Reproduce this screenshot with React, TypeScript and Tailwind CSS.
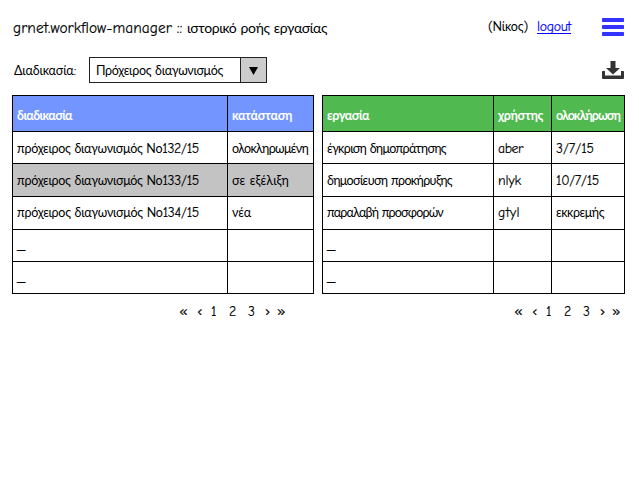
import { useLayoutEffect, useRef, useState } from "react";

/** A run of text whose letter spacing is adjusted so that it fills a given width. */
function Fit({ text, width, className = "" }: { text: string; width: number; className?: string }) {
  const ref = useRef<HTMLSpanElement>(null);
  const [spacing, setSpacing] = useState(0);
  useLayoutEffect(() => {
    if (!ref.current) return;
    const natural = ref.current.getBoundingClientRect().width - spacing * text.length;
    setSpacing((width - natural) / text.length);
  }, [text, width]);
  // Latin letters and digits are thinner than the Greek ones, so they are drawn a little larger and heavier.
  const runs = text.split(/([A-Za-z0-9./:()‹›«»-]+)/);
  return (
    <span ref={ref} className={`inline-block whitespace-pre ${className}`} style={{ letterSpacing: `${spacing}px` }}>
      {runs.map((run, i) =>
        i % 2 ? (
          <span key={i} className="text-[1.1em] [-webkit-text-stroke:0.15px_currentColor]">
            {run}
          </span>
        ) : (
          run
        ),
      )}
    </span>
  );
}

type Cell = [string, number];

function Row({ cells, className }: { cells: Cell[]; className: string }) {
  return (
    <>
      {cells.map(([text, width], i) => (
        <div key={i} className={`flex items-center border-r border-b border-black pl-1 ${className}`}>
          {text === "_" ? <span className="inline-block origin-left scale-x-[1.35]">_</span> : text && <Fit text={text} width={width} />}
        </div>
      ))}
    </>
  );
}

function Pager() {
  const items: [string, string, number][] = [
    ["«", "w-[18px]", 10],
    ["‹", "w-[13px]", 5],
    ["1", "w-[18px]", 6],
    ["2", "w-[19px]", 7],
    ["3", "w-[18px]", 7],
    ["›", "w-[12px]", 5],
    ["»", "w-[10px]", 10],
  ];
  return (
    <nav className="flex text-[12.5px] leading-4">
      {items.map(([label, slot, width]) => (
        <span key={label} className={slot}>
          <Fit text={label} width={width} className={/\d/.test(label) ? "pt-[1px] pl-[1px]" : "text-[14px]"} />
        </span>
      ))}
    </nav>
  );
}

export default function App() {
  return (
    <div className="h-[501px] w-[639px] overflow-hidden bg-white font-['Comic_Sans_MS','Comic_Neue','Lato','Open_Sans',sans-serif] text-[12.5px] leading-4 text-black">
      <header className="flex h-[56px] pt-[17px] pl-[13px]">
        <h1 className="w-[475px] pt-[1px] text-[14px] leading-5">
          <Fit text="grnet.workflow-manager :: " width={174} />
          <Fit text="ιστορικό ροής εργασίας" width={140} />
        </h1>
        <span className="w-[49px] pt-[2px]">
          <Fit text="(Νίκος)" width={40} />
        </span>
        <a className="h-[17px] w-[34px] border-b border-[#0000ff] pt-[2px] text-[#0000ff]">
          <Fit text="logout" width={34} className="leading-[14px]" />
        </a>
        <svg className="mt-[1px] ml-[31px] h-[18px] w-[22px]" viewBox="0 0 22 18" fill="#3333ff">
          <rect width="22" height="4" rx=".7" />
          <rect y="7" width="22" height="4" rx=".7" />
          <rect y="14" width="22" height="4" rx=".7" />
        </svg>
      </header>

      <div className="flex h-[39px] pl-[14px]">
        <label className="w-[75px] pt-[7px]">
          <Fit text="Διαδικασία:" width={62} />
        </label>
        <div className="mt-[1px] flex h-[26px] w-[178px] border border-[#222]">
          <div className="flex w-[151px] items-center border-r border-[#222] pt-[2px] pl-[6px]">
            <Fit text="Πρόχειρος διαγωνισμός" width={127} />
          </div>
          <div className="flex flex-1 items-center justify-center bg-[#cccccc]">
            <svg className="mt-[2px] h-[8px] w-[9px]" viewBox="0 0 9 8">
              <path d="M0 0H9L4.5 8Z" />
            </svg>
          </div>
        </div>
        <svg className="mt-[5px] ml-[335px] h-[18px] w-[22px]" viewBox="0 0 22 18" fill="#333333">
          <path d="M8.500 0h5v7H18l-7 6.500L4 7h4.500Z" />
          <path d="M.7 10H3v4.500h16V10h2.300a.7.7 0 0 1 .7.7V17a1 1 0 0 1-1 1H1a1 1 0 0 1-1-1v-6.300a.7.7 0 0 1 .7-.7Z" />
        </svg>
      </div>

      <main className="flex gap-2 pl-3">
        <section>
          <div className="grid w-[302px] grid-cols-[215px_86px] grid-rows-[36px_32px_33px_33px_32px_32px] border-t border-l border-black">
            <Row className="bg-[#7295ff] pt-1 font-bold text-white" cells={[["διαδικασία", 55], ["κατάσταση", 60]]} />
            <Row className="pt-[2px]" cells={[["πρόχειρος διαγωνισμός Νο132/15", 182], ["ολοκληρωμένη", 76]]} />
            <Row className="bg-[#c3c3c3] pt-[2px]" cells={[["πρόχειρος διαγωνισμός Νο133/15", 182], ["σε εξέλιξη", 57]]} />
            <Row className="" cells={[["πρόχειρος διαγωνισμός Νο134/15", 182], ["νέα", 19]]} />
            <Row className="" cells={[["_", 8], ["", 0]]} />
            <Row className="" cells={[["_", 8], ["", 0]]} />
          </div>
          <div className="pt-[9px] pl-[167px]">
            <Pager />
          </div>
        </section>

        <section>
          <div className="grid w-[303px] grid-cols-[171px_58px_73px] grid-rows-[36px_32px_33px_33px_32px_32px] border-t border-l border-black">
            <Row className="bg-[#50b950] pt-1 font-bold text-white" cells={[["εργασία", 42], ["χρήστης", 45], ["ολοκλήρωση", 64]]} />
            <Row className="pt-[2px]" cells={[["έγκριση δημοπράτησης", 119], ["aber", 25], ["3/7/15", 38]]} />
            <Row className="pt-[2px]" cells={[["δημοσίευση προκήρυξης", 125], ["nlyk", 23], ["10/7/15", 43]]} />
            <Row className="" cells={[["παραλαβή προσφορών", 116], ["gtyl", 22], ["εκκρεμής", 48]]} />
            <Row className="" cells={[["_", 8], ["", 0], ["", 0]]} />
            <Row className="" cells={[["_", 8], ["", 0], ["", 0]]} />
          </div>
          <div className="pt-[9px] pl-[192px]">
            <Pager />
          </div>
        </section>
      </main>
    </div>
  );
}
